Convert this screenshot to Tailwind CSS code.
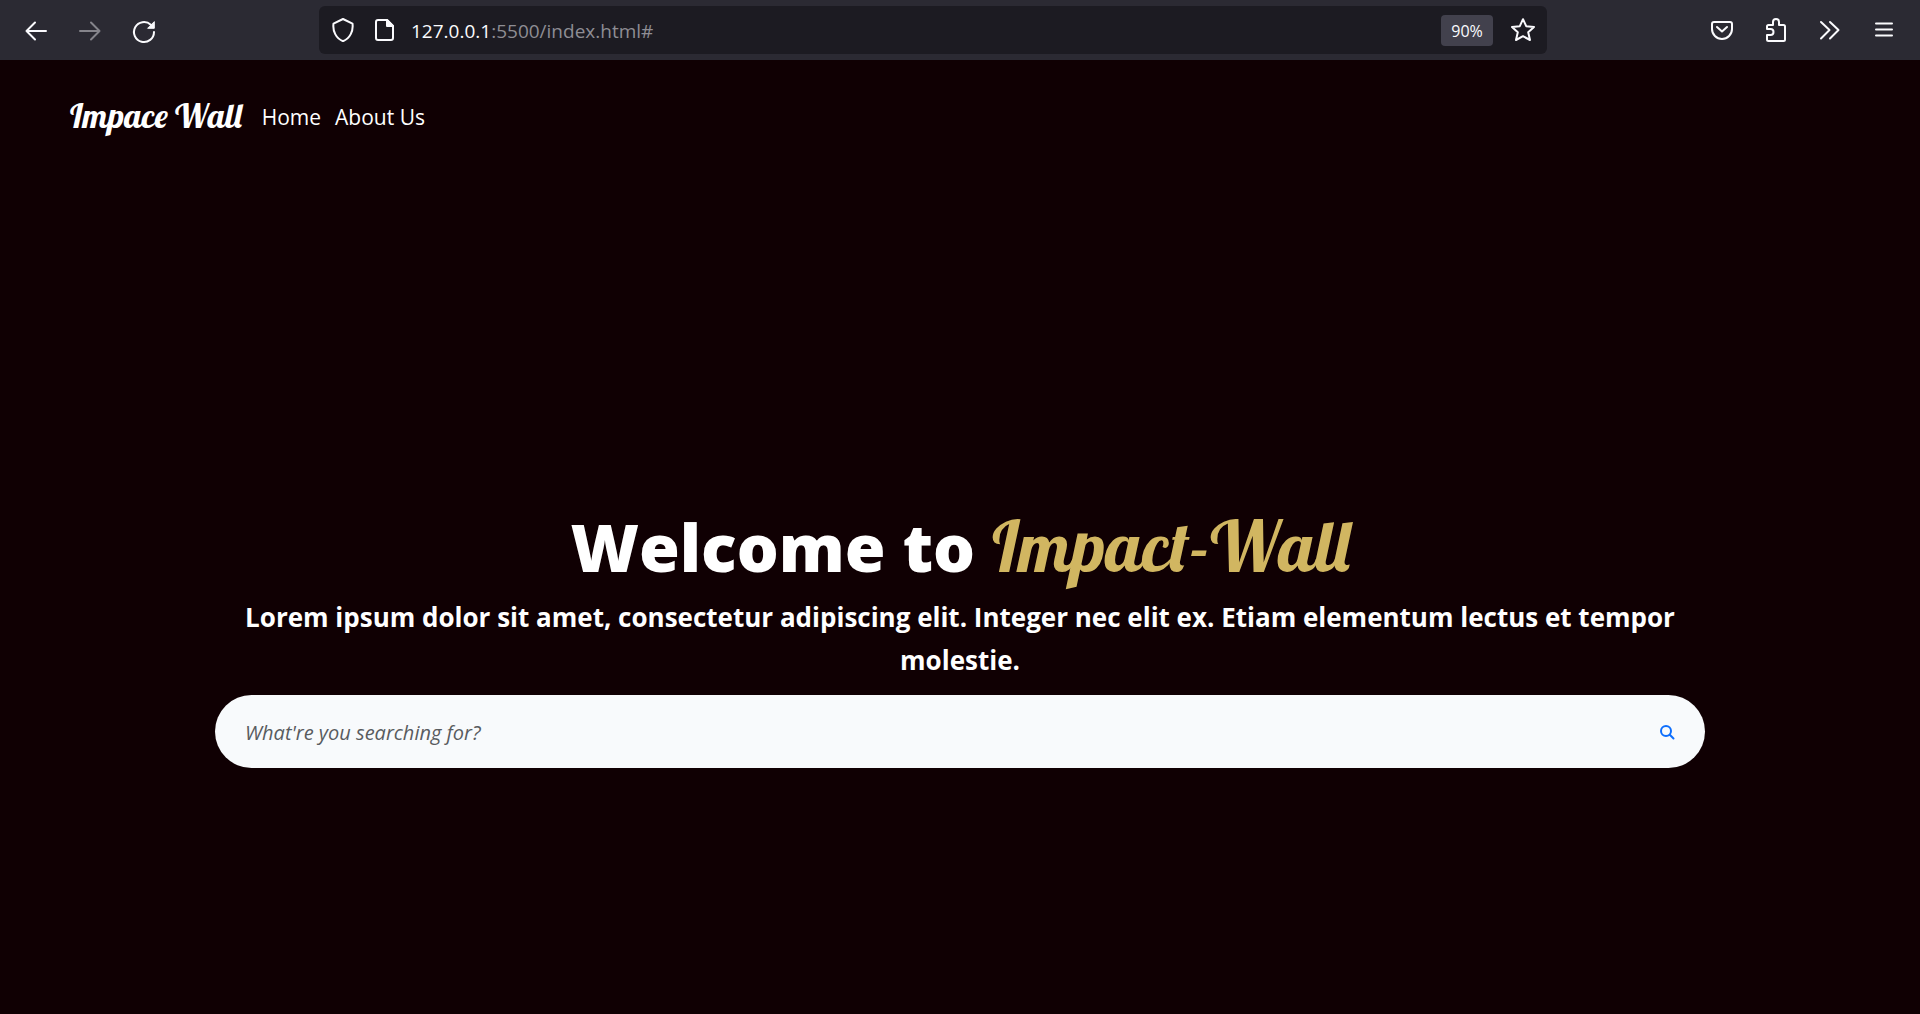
<!DOCTYPE html>
<html lang="en">
<head>
<meta charset="utf-8">
<title>Impact-Wall</title>
<script src="https://cdn.jsdelivr.net/npm/@tailwindcss/browser@4"></script>
</head>
<body class="flex min-h-screen flex-col bg-[#100003] font-['Open_Sans','Noto_Sans',sans-serif] text-white">
  <header class="grid h-[60px] grid-cols-[319px_minmax(0,1fr)_373px] items-center bg-[#2b2a33] text-[#fbfbfe]">
    <div class="flex items-center gap-[30px] pl-6">
      <button aria-label="Back" class="size-6"><svg viewBox="0 0 24 24" class="size-6" fill="none" stroke="currentColor" stroke-width="2" stroke-linecap="round" stroke-linejoin="round"><path d="M22 13H2.500M11 4.500 2.500 13 11 21.500"/></svg></button>
      <button aria-label="Forward" disabled class="size-6 text-[#85848b]"><svg viewBox="0 0 24 24" class="size-6" fill="none" stroke="currentColor" stroke-width="2" stroke-linecap="round" stroke-linejoin="round"><path d="M2 13h19.500M13 4.500l8.500 8.500-8.500 8.500"/></svg></button>
      <button aria-label="Reload" class="size-6"><svg viewBox="0 0 24 24" class="size-6 overflow-visible" fill="none" stroke="currentColor" stroke-width="2" stroke-linecap="round"><path d="M22 14a10 10 0 1 1-3.200-7.300"/><path d="M22.300 4v6.300H16z" fill="currentColor" stroke-width="1" stroke-linejoin="round"/></svg></button>
    </div>
    <div class="flex h-12 items-center rounded-md bg-[#1c1b22] pr-3 pl-3">
      <svg viewBox="0 0 24 24" class="size-6 shrink-0" fill="none" stroke="currentColor" stroke-width="2" stroke-linejoin="round"><path d="M12 1 21.500 5.600C22.500 13 19 20.500 12 23.200 5 20.500 1.500 13 2.500 5.600z"/></svg>
      <svg viewBox="0 0 24 24" class="ml-[18px] size-6 shrink-0" fill="none" stroke="currentColor" stroke-width="2" stroke-linejoin="round"><path d="M5 2h9l6 6v12a2 2 0 0 1-2 2H5a2 2 0 0 1-2-2V4a2 2 0 0 1 2-2z"/><path d="M14 2v6h6z" fill="currentColor"/></svg>
      <p class="ml-[14px] flex-1 pt-[2px] text-[19px] leading-6 text-[#8e8d94]"><span class="text-[#fbfbfe]">127.0.0.1</span>:5500/index.html#</p>
      <button class="h-[31px] w-[52px] rounded-sm bg-[#42414d] pt-[2px] text-base">90%</button>
      <button aria-label="Bookmark" class="ml-[18px] size-6"><svg viewBox="0 0 24 24" class="size-6" fill="none" stroke="currentColor" stroke-width="2" stroke-linejoin="round"><path d="M12 1.200 15.200 8.200 23 9 17.200 14.200 19 22 12 18.200 5 22 6.800 14.200 1 9 8.800 8.200z"/></svg></button>
    </div>
    <div class="flex items-center justify-end gap-[30px] pr-6">
      <button aria-label="Save to Pocket" class="size-6"><svg viewBox="0 0 24 24" class="size-6" fill="none" stroke="currentColor" stroke-width="2" stroke-linecap="round" stroke-linejoin="round"><path d="M4 4h16a2 2 0 0 1 2 2v5a10 10 0 0 1-20 0V6a2 2 0 0 1 2-2z"/><path d="m7 9 5 4.500L17 9"/></svg></button>
      <button aria-label="Extensions" class="size-6"><svg viewBox="0 0 24 24" class="size-6" fill="none" stroke="currentColor" stroke-width="2" stroke-linejoin="round"><path d="M4.500 7H9V4a3 3 0 0 1 6 0v3h4.500a1.500 1.500 0 0 1 1.500 1.500v13a1.500 1.500 0 0 1-1.500 1.500h-15A1.500 1.500 0 0 1 3 21.500V17h3.500a3 3 0 0 0 0-6H3V8.500A1.500 1.500 0 0 1 4.500 7z"/></svg></button>
      <button aria-label="More tools" class="size-6"><svg viewBox="0 0 24 24" class="size-6" fill="none" stroke="currentColor" stroke-width="2" stroke-linecap="round" stroke-linejoin="round"><path d="m3 4 8.500 8L3 20.500M12 4l8.500 8-8.500 8.500"/></svg></button>
      <button aria-label="Menu" class="size-6"><svg viewBox="0 0 24 24" class="size-6" fill="none" stroke="currentColor" stroke-width="2" stroke-linecap="round"><path d="M4 5.500h16M4 11.500h16M4 17.500h16"/></svg></button>
    </div>
  </header>
  <nav class="flex h-[114px] items-center pl-[70px]">
    <a href="#" class="mr-5 pb-[2px] font-['Lobster','Liberation_Serif',serif] text-[34px] leading-10 font-normal">Impace Wall</a>
    <a href="#" class="mr-[14px] text-[21px] leading-8">Home</a>
    <a href="#" class="text-[21px] leading-8">About Us</a>
  </nav>
  <main class="flex flex-1 flex-col items-center justify-center px-[215px] pt-[84px]">
    <h1 class="mb-2 text-center text-[66px] leading-[84px] font-extrabold">Welcome to <span class="font-['Lobster','Liberation_Serif',serif] text-[71px] font-normal text-[#d1b661]">Impact-Wall</span></h1>
    <p class="px-6 text-center text-[26px] leading-[43px] font-bold">Lorem ipsum dolor sit amet, consectetur adipiscing elit. Integer nec elit ex. Etiam elementum lectus et tempor molestie.</p>
    <form class="mt-[13px] flex h-[73px] w-full items-center rounded-full bg-[#f8fafc] pr-[30px] pl-[30px]">
      <input type="search" aria-label="Search" placeholder="What're you searching for?" class="h-full min-w-0 flex-1 pt-[2px] text-xl text-[#212529] italic outline-none placeholder:text-[#595c5f]">
      <button aria-label="Submit search" class="size-4 text-[#0d6efd]"><svg viewBox="0 0 16 16" class="size-4" fill="none" stroke="currentColor" stroke-width="2" stroke-linecap="round"><circle cx="7" cy="7" r="5"/><path d="m10.800 10.800 3.700 3.700"/></svg></button>
    </form>
  </main>
</body>
</html>
